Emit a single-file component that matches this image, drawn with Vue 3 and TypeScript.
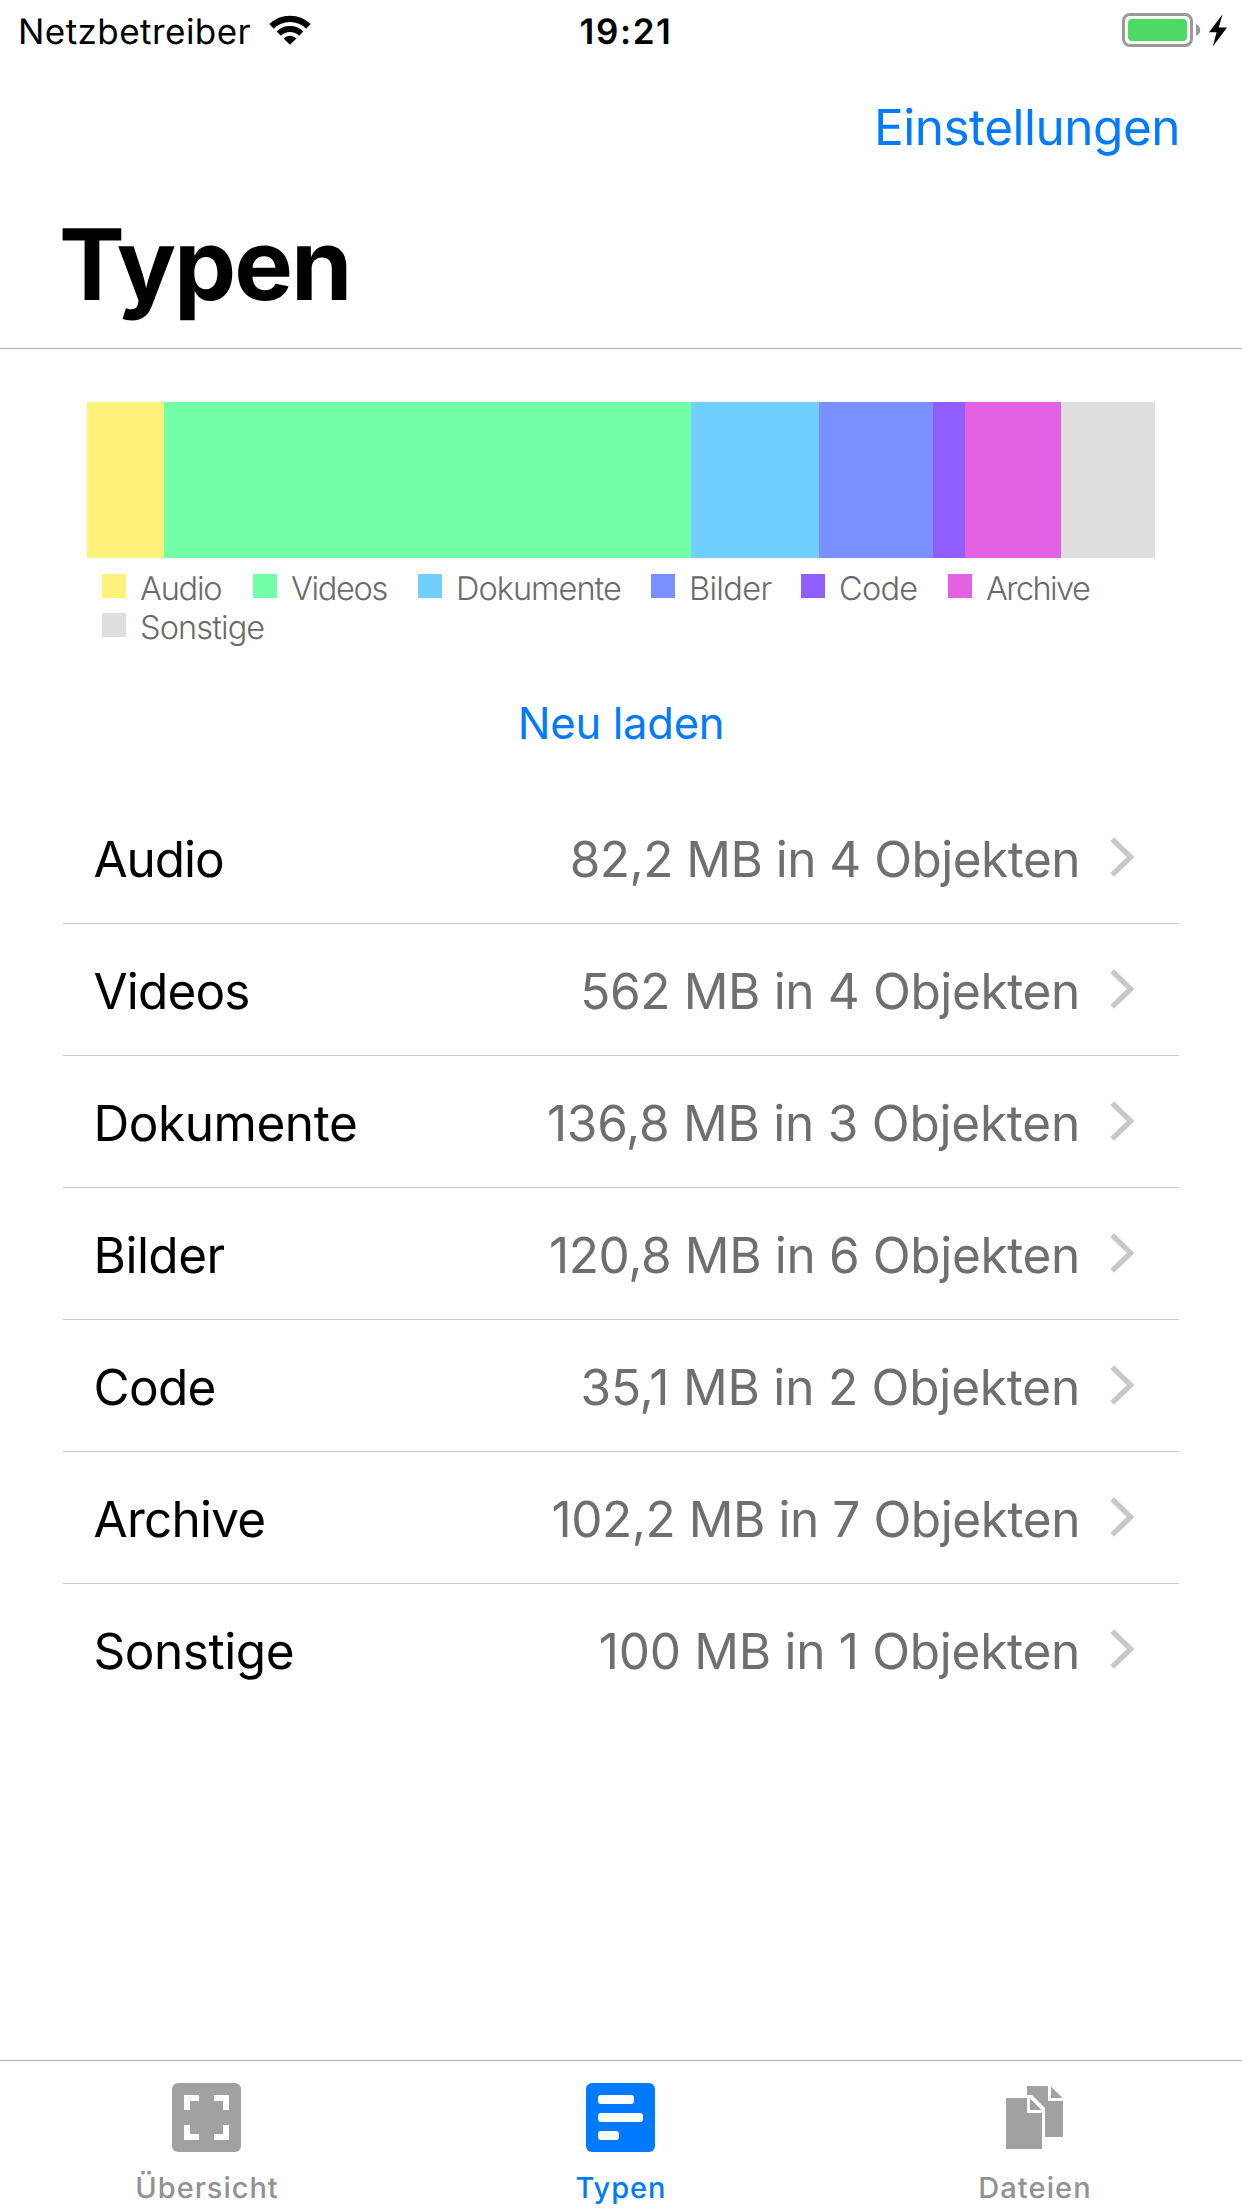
<script setup lang="ts">
interface FileType {
  name: string
  amount: number
  summary: string
  color: string
  nameSpacing: number
  summarySpacing: number
  legendSpacing: number
  legendWidth: number
}

interface Tab {
  id: 'overview' | 'types' | 'files'
  label: string
  spacing: number
}

const types: FileType[] = [
  { name: 'Audio', amount: 82.2, summary: '82,2 MB in 4 Objekten', color: '#fff27b', nameSpacing: -1.05, summarySpacing: -0.52, legendSpacing: -1.2, legendWidth: 151 },
  { name: 'Videos', amount: 562, summary: '562 MB in 4 Objekten', color: '#72ffa6', nameSpacing: -0.85, summarySpacing: -0.36, legendSpacing: -1.33, legendWidth: 165 },
  { name: 'Dokumente', amount: 136.8, summary: '136,8 MB in 3 Objekten', color: '#70cfff', nameSpacing: -0.45, summarySpacing: -0.23, legendSpacing: -0.96, legendWidth: 233 },
  { name: 'Bilder', amount: 120.8, summary: '120,8 MB in 6 Objekten', color: '#7b90ff', nameSpacing: -0.5, summarySpacing: -0.35, legendSpacing: -0.66, legendWidth: 150 },
  { name: 'Code', amount: 35.1, summary: '35,1 MB in 2 Objekten', color: '#915fff', nameSpacing: -0.7, summarySpacing: -0.2, legendSpacing: -0.73, legendWidth: 147 },
  { name: 'Archive', amount: 102.2, summary: '102,2 MB in 7 Objekten', color: '#e262e2', nameSpacing: -0.75, summarySpacing: -0.43, legendSpacing: -1.56, legendWidth: 160 },
  { name: 'Sonstige', amount: 100, summary: '100 MB in 1 Objekten', color: '#dedede', nameSpacing: -0.45, summarySpacing: -0.28, legendSpacing: -0.89, legendWidth: 180 },
]

const tabs: Tab[] = [
  { id: 'overview', label: 'Übersicht', spacing: 0.97 },
  { id: 'types', label: 'Typen', spacing: 0.93 },
  { id: 'files', label: 'Dateien', spacing: 1.11 },
]

const activeTab: Tab['id'] = 'types'
</script>

<template>
  <div class="screen">
    <div class="status">
      <div class="carrier">
        <span>Netzbetreiber</span>
        <svg class="wifi" width="42" height="30" viewBox="0 0 42 30">
          <path d="M2.6 11.4A26.2 26.2 0 0 1 39.4 11.4" fill="none" stroke="#000" stroke-width="6.4" />
          <path d="M9.8 18.6A16 16 0 0 1 32.2 18.6" fill="none" stroke="#000" stroke-width="6" />
          <path d="M14.6 23.4A9.2 9.2 0 0 1 27.4 23.4L21 29.8Z" />
        </svg>
      </div>
      <div class="time">19:21</div>
      <div class="power">
        <svg width="106" height="36" viewBox="0 0 106 36">
          <rect x="1.5" y="1.5" width="68" height="31" rx="6.5" fill="none" stroke="#999" stroke-width="3" />
          <rect x="6" y="6" width="59" height="22" rx="4" fill="#4cd964" />
          <path d="M74 11A6.4 6.4 0 0 1 74 23Z" fill="#999" />
          <path d="M100.6 1.2L87 19.2H94.6L90.8 33.6L105 14.4H96.8Z" />
        </svg>
      </div>
    </div>

    <header class="header">
      <a class="settings">Einstellungen</a>
      <h1>Typen</h1>
    </header>

    <main>
      <div class="chart">
        <div
          v-for="type in types"
          :key="type.name"
          :style="{ flexGrow: type.amount, backgroundColor: type.color }"
        ></div>
      </div>
      <div class="legend">
        <div v-for="type in types" :key="type.name" class="entry" :style="{ width: type.legendWidth + 'px' }">
          <i :style="{ backgroundColor: type.color }"></i>
          <span :style="{ letterSpacing: type.legendSpacing + 'px' }">{{ type.name }}</span>
        </div>
      </div>
      <button class="reload">Neu laden</button>
      <ul class="list">
        <li v-for="type in types" :key="type.name">
          <span class="name" :style="{ letterSpacing: type.nameSpacing + 'px' }">{{ type.name }}</span>
          <span class="summary" :style="{ letterSpacing: type.summarySpacing + 'px' }">{{ type.summary }}</span>
          <svg class="chevron" width="24" height="40" viewBox="0 0 24 40">
            <path d="M2.1 2.1L20.6 20L2.1 37.9" fill="none" stroke="#c7c7cc" stroke-width="5.4" />
          </svg>
        </li>
      </ul>
    </main>

    <nav class="tabs">
      <div v-for="tab in tabs" :key="tab.id" class="tab" :class="{ active: tab.id === activeTab }">
        <svg width="69" height="69" viewBox="0 0 69 69">
          <template v-if="tab.id === 'overview'">
            <rect width="69" height="69" rx="6" fill="#a1a1a1" />
            <path d="M12 12H27V18H18V27H12ZM42 12H57V27H51V18H42ZM12 42H18V51H27V57H12ZM51 42H57V57H42V51H51Z" fill="#fff" />
          </template>
          <template v-else-if="tab.id === 'types'">
            <rect width="69" height="69" rx="6" fill="#007aff" />
            <g fill="#fff">
              <rect x="12" y="12" width="36" height="9" rx="3" />
              <rect x="12" y="30" width="45" height="9" rx="3" />
              <rect x="12" y="48" width="21" height="9" rx="3" />
            </g>
          </template>
          <g v-else fill="#a1a1a1">
            <path d="M6 15H27V30H42V66H6ZM30 15.5L41.5 27H30Z" />
            <path d="M27 3H48V18H63V54H45V25L32 12H27ZM51 3.5L62.5 15H51Z" />
          </g>
        </svg>
        <span :style="{ letterSpacing: tab.spacing + 'px' }">{{ tab.label }}</span>
      </div>
    </nav>
  </div>
</template>

<style>
body {
  background: #fff;
}
</style>

<style scoped>
.screen {
  display: flex;
  flex-direction: column;
  width: 1242px;
  height: 2208px;
  overflow: hidden;
  background: #fff;
  color: #000;
  font-family: Inter, "Liberation Sans", sans-serif;
  font-size: 49.5px;
  text-rendering: geometricPrecision;
}

.status {
  display: flex;
  flex: none;
  height: 63px;
  line-height: 65px;
  font-size: 35px;
}

.carrier {
  display: flex;
  flex: 1 1 0;
  padding-left: 18px;
  letter-spacing: 0.45px;
}

.wifi {
  margin: 15px 0 0 18px;
}

.time {
  padding-left: 6px;
  font-weight: 600;
  letter-spacing: 1.6px;
}

.power {
  display: flex;
  flex: 1 1 0;
  justify-content: flex-end;
  padding: 13px 14px 0 0;
}

.header {
  display: flex;
  flex: none;
  flex-direction: column;
  height: 285px;
  border-bottom: 1px solid #b2b2b2;
}

.settings {
  align-self: flex-end;
  height: 128px;
  padding-right: 62px;
  line-height: 128px;
  color: #007aff;
  letter-spacing: -0.51px;
}

h1 {
  margin: 13px 0 0 59px;
  font-size: 98.7px;
  font-weight: 700;
  line-height: 120px;
  letter-spacing: -2px;
}

main {
  display: flex;
  flex: 1;
  flex-direction: column;
}

.chart {
  display: flex;
  height: 156px;
  margin: 53px 87px 0;
}

.legend {
  display: flex;
  flex-wrap: wrap;
  margin: 9px 87px 0 102px;
}

.entry {
  display: flex;
  align-items: center;
  height: 39px;
  font-size: 32.5px;
  font-weight: 300;
  line-height: 39px;
  color: #6a6a6a;
}

.entry i {
  width: 24px;
  height: 24px;
  margin: 0 14px 1px 0;
}

.entry span {
  padding-top: 3px;
}

.reload {
  align-self: center;
  margin: 48px 0 0;
  padding: 0;
  border: 0;
  background: none;
  color: #007aff;
  font-family: inherit;
  font-size: 43.5px;
  line-height: 60px;
  letter-spacing: -0.27px;
}

.list {
  margin: 39px 63px 0;
  padding: 0;
  list-style: none;
}

li {
  display: flex;
  align-items: center;
  box-sizing: border-box;
  height: 132px;
  padding: 0 45px 0 30.5px;
  border-bottom: 1px solid #c8c7cc;
}

li:last-child {
  border-bottom-color: transparent;
}

.name,
.summary {
  padding-top: 3px;
  line-height: 60px;
}

.summary {
  margin-left: auto;
  color: #6f6f6f;
}

.chevron {
  margin: 0 0 2px 30px;
}

.tabs {
  display: flex;
  flex: none;
  box-sizing: border-box;
  height: 148px;
  border-top: 1px solid #b2b2b2;
}

.tab {
  display: flex;
  flex: 1;
  flex-direction: column;
  align-items: center;
  padding-top: 22px;
  font-size: 29px;
  font-weight: 500;
  line-height: 36px;
  color: #929292;
}

.tab svg {
  margin-right: 1px;
}

.tab span {
  margin-top: 18px;
}

.tab.active {
  color: #007aff;
}
</style>
